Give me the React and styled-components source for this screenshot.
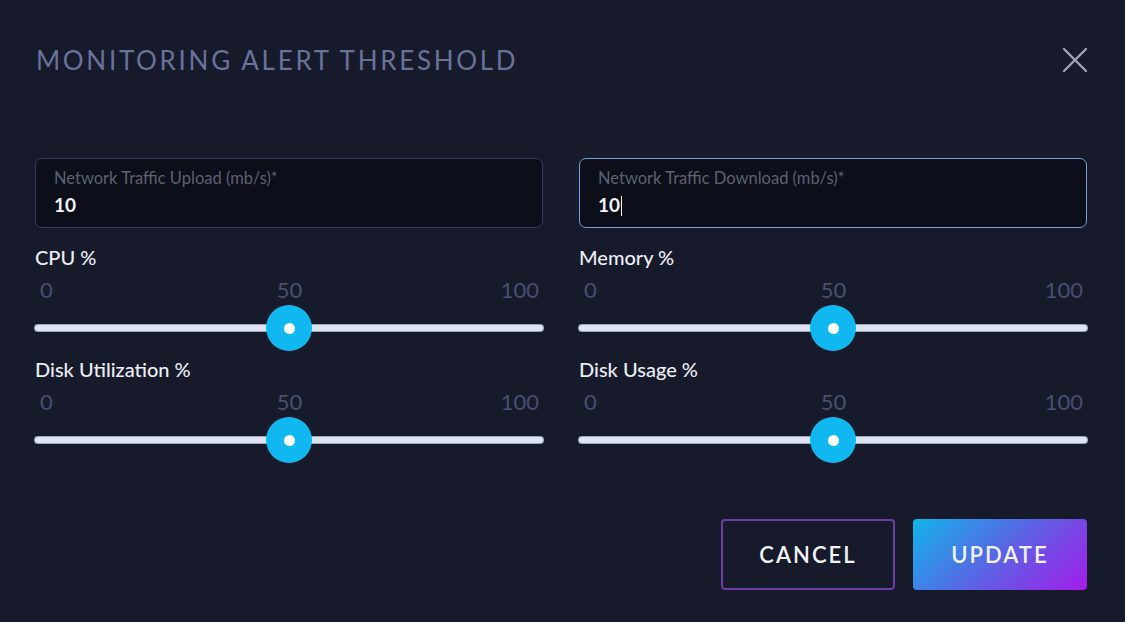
import React from 'react';
import styled, { createGlobalStyle } from 'styled-components';

const GlobalStyle = createGlobalStyle`
  html, body {
    margin: 0;
    padding: 0;
    background: #161a2b;
  }
  * { box-sizing: border-box; }
`;

const Dialog = styled.div`
  width: 1125px;
  height: 622px;
  display: flex;
  flex-direction: column;
  padding: 44px 38px 32px 35px;
  background: #161a2b;
  font-family: Lato, "Noto Sans", sans-serif;
`;

const Header = styled.div`
  display: flex;
  align-items: center;
  justify-content: space-between;
  height: 32px;
`;

const Title = styled.h1`
  margin: 0 0 0 1px;
  font-size: 26px;
  font-weight: 400;
  letter-spacing: 2.7px;
  color: #6a729c;
  line-height: 32px;
`;

const CloseButton = styled.button`
  width: 28px;
  height: 28px;
  margin-right: -2px;
  padding: 0;
  border: 0;
  background: none;
  display: flex;
  align-items: center;
  justify-content: center;
  cursor: pointer;
`;

const Grid = styled.div`
  display: grid;
  grid-template-columns: 1fr 1fr;
  column-gap: 36px;
  margin-top: 82px;
`;

const Field = styled.label`
  display: flex;
  flex-direction: column;
  height: 70px;
  padding: 10px 18px 0;
  border-radius: 7px;
  background: #0c0e19;
  border: 1.5px solid ${p => (p.$focused ? '#7f9ed6' : '#363d5c')};
`;

const FieldLabel = styled.span`
  font-size: 16.5px;
  line-height: 18px;
  color: #5d6172;
`;

const FieldValue = styled.span`
  margin-top: 7px;
  font-size: 19px;
  line-height: 22px;
  font-weight: 700;
  color: #f4f5f8;
`;

const Caret = styled.span`
  display: inline-block;
  width: 1px;
  height: 20px;
  margin-left: 1px;
  vertical-align: -4px;
  background: #ffffff;
`;

const SliderBlock = styled.div`
  display: flex;
  flex-direction: column;
  margin-top: ${p => (p.$first ? '18px' : '5px')};
`;

const SliderLabel = styled.div`
  font-size: 20px;
  line-height: 22px;
  font-weight: 500;
  color: #eceef4;
`;

const Ticks = styled.div`
  display: grid;
  grid-template-columns: 1fr auto 1fr;
  margin-top: 9px;
  padding: 0 4px 0 5px;
  font-size: 22px;
  line-height: 26px;
  font-weight: 400;
  color: #485070;
`;

const Tick = styled.span`
  justify-self: ${p => p.$align};
`;

const TrackArea = styled.div`
  position: relative;
  height: 50px;
  display: flex;
  align-items: center;
`;

const Track = styled.div`
  width: 100%;
  height: 6px;
  border-radius: 3px;
  background: #dfe4f2;
  box-shadow: 0 0 0 1px #9aa2c0;
`;

const Thumb = styled.div`
  position: absolute;
  top: 50%;
  width: 46px;
  height: 46px;
  margin: -23px 0 0 -23px;
  border-radius: 50%;
  background: #0fb9f0;
  display: flex;
  align-items: center;
  justify-content: center;

  &::after {
    content: '';
    width: 11px;
    height: 11px;
    border-radius: 50%;
    background: #ffffff;
  }
`;

const Footer = styled.div`
  margin-top: auto;
  display: flex;
  justify-content: flex-end;
  gap: 18px;
`;

const Button = styled.button`
  width: 174px;
  height: 71px;
  border-radius: 4px;
  font-family: Lato, "Noto Sans", sans-serif;
  font-size: 22px;
  font-weight: 600;
  letter-spacing: 2px;
  color: #f2f3f7;
  cursor: pointer;
  border: ${p => (p.$primary ? '0' : '2px solid #6b3ea6')};
  background: ${p =>
    p.$primary ? 'linear-gradient(135deg, #12b4ea 0%, #5a64e4 50%, #a41ce8 100%)' : 'transparent'};
`;

const sliders = [
  { label: 'CPU %', value: 50 },
  { label: 'Memory %', value: 50 },
  { label: 'Disk Utilization %', value: 50 },
  { label: 'Disk Usage %', value: 50 },
];

const Slider = ({ label, value, first }) => (
  <SliderBlock $first={first}>
    <SliderLabel>{label}</SliderLabel>
    <Ticks>
      <Tick $align="start">0</Tick>
      <Tick $align="center">50</Tick>
      <Tick $align="end">100</Tick>
    </Ticks>
    <TrackArea>
      <Track />
      <Thumb style={{ left: `${value}%` }} />
    </TrackArea>
  </SliderBlock>
);

const App = () => {
  return (
    <Dialog>
      <GlobalStyle />
      <Header>
        <Title>MONITORING ALERT THRESHOLD</Title>
        <CloseButton aria-label="Close">
          <svg width="26" height="26" viewBox="0 0 26 26">
            <path d="M2 2 L24 24 M24 2 L2 24" stroke="#a3a6b4" strokeWidth="2.4" strokeLinecap="round" />
          </svg>
        </CloseButton>
      </Header>
      <Grid>
        <Field>
          <FieldLabel>Network Traffic Upload (mb/s)*</FieldLabel>
          <FieldValue>10</FieldValue>
        </Field>
        <Field $focused>
          <FieldLabel>Network Traffic Download (mb/s)*</FieldLabel>
          <FieldValue>
            10
            <Caret />
          </FieldValue>
        </Field>
        {sliders.map((s, i) => (
          <Slider key={s.label} label={s.label} value={s.value} first={i < 2} />
        ))}
      </Grid>
      <Footer>
        <Button>CANCEL</Button>
        <Button $primary>UPDATE</Button>
      </Footer>
    </Dialog>
  );
};

export default App;
